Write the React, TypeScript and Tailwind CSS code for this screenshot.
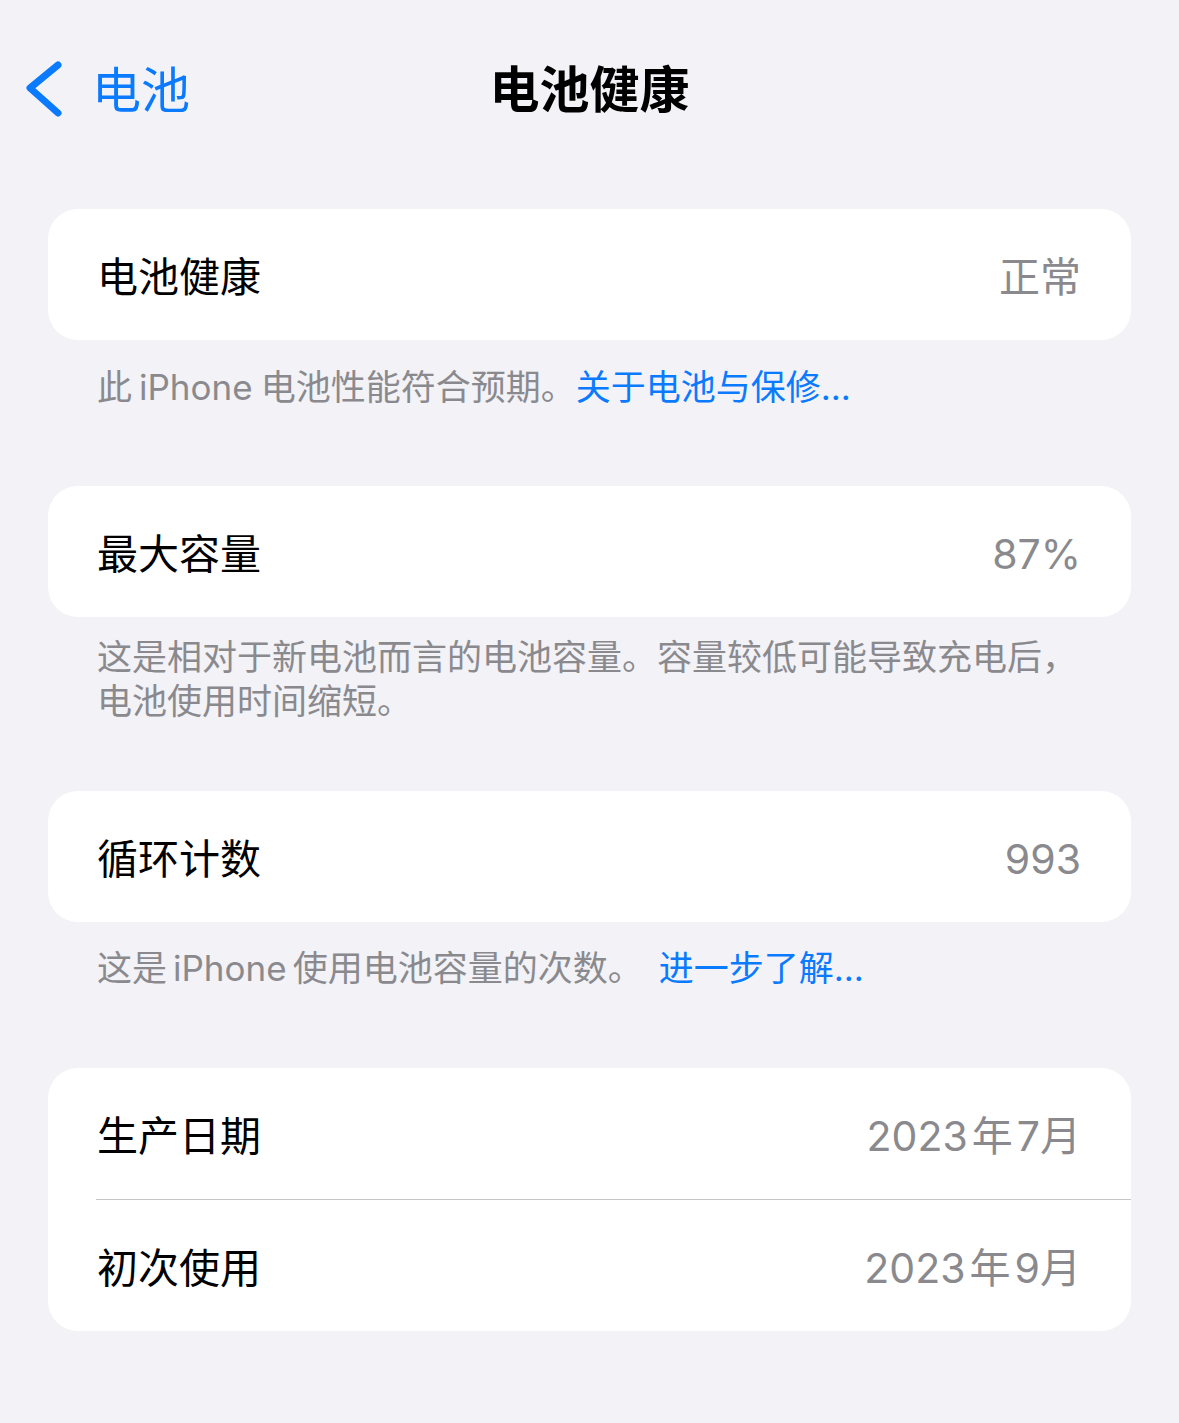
import React from "react";

const font = { fontFamily: 'Inter, "Noto Sans CJK SC", sans-serif' };

function Row({ label, value }: { label: string; value: React.ReactNode }) {
  return (
    <div className="flex h-[131px] items-center justify-between pl-[49px] pr-[50px] pt-[5px]">
      <span className="text-[41px] leading-none text-black">{label}</span>
      <span className="text-[41px] leading-none text-[#8a8a8e]">{value}</span>
    </div>
  );
}

function Card({ children }: { children: React.ReactNode }) {
  return <div className="mx-[48px] rounded-[30px] bg-white">{children}</div>;
}

export default function App() {
  return (
    <div className="min-h-[1423px] w-full bg-[#f2f2f7]" style={font}>
      {/* nav */}
      <div className="grid h-[180px] grid-cols-[1fr_auto_1fr] items-center">
        <div className="flex items-center pl-[24px]">
          <svg width="40" height="60" viewBox="0 0 40 60" className="block">
            <polyline
              points="34,5 6,28 34,53"
              fill="none"
              stroke="#0a7aff"
              strokeWidth="7"
              strokeLinecap="round"
              strokeLinejoin="round"
            />
          </svg>
          <span className="ml-[28px] text-[49px] leading-none text-[#0a7aff]">电池</span>
        </div>
        <div className="text-[50px] font-bold leading-none text-black">电池健康</div>
        <div />
      </div>

      <div className="mt-[29px]">
        <Card>
          <Row label="电池健康" value="正常" />
        </Card>
        <div className="px-[97px] pt-[25px] text-[35px] leading-[45px] text-[#8a8a8e]">
          此<span className="ml-[7px] mr-[8px]">iPhone</span>电池性能符合预期。
          <span className="text-[#0a7aff]">关于电池与保修...</span>
        </div>
      </div>

      <div className="mt-[76px]">
        <Card>
          <Row label="最大容量" value="87%" />
        </Card>
        <div className="pl-[97px] pr-[40px] pt-[18px] text-[35px] leading-[44px] text-[#8a8a8e]">
          这是相对于新电池而言的电池容量。容量较低可能导致充电后，
          <br />
          电池使用时间缩短。
        </div>
      </div>

      <div className="mt-[68px]">
        <Card>
          <Row label="循环计数" value="993" />
        </Card>
        <div className="px-[97px] pt-[24px] text-[35px] leading-[45px] text-[#8a8a8e]">
          这是<span className="mx-[6px]">iPhone</span>使用电池容量的次数。
          <span className="ml-[16px] text-[#0a7aff]">进一步了解...</span>
        </div>
      </div>

      <div className="mt-[77px]">
        <Card>
          <Row
            label="生产日期"
            value={
              <>
                2023<span className="mx-[4px]">年</span>7月
              </>
            }
          />
          <div className="ml-[48px] h-px bg-[#c6c6c8]" />
          <Row
            label="初次使用"
            value={
              <>
                2023<span className="mx-[4px]">年</span>9月
              </>
            }
          />
        </Card>
      </div>
    </div>
  );
}
